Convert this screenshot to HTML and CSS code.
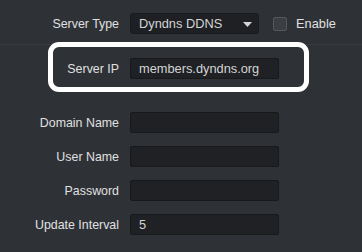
FILE: index.html
```html
<!DOCTYPE html>
<html lang="en">
<head>
  <meta charset="UTF-8" />
  <title>DDNS Settings</title>
  <link rel="stylesheet" href="styles.css">
</head>
<body>

  <div class="top">
    <div class="row">
      <label class="lbl">Server Type</label>
      <div class="select">
        <span>Dyndns DDNS</span>
        <svg class="arrow" width="9" height="5" viewBox="0 0 9 5"><path d="M0 0 L9 0 L4.5 5 Z" fill="#d6d6d6"/></svg>
      </div>
      <span class="check"></span>
      <span class="enable">Enable</span>
    </div>
  </div>

  <!-- highlighted field -->
  <div class="highlight">
    <div class="row">
      <label class="lbl">Server IP</label>
      <div class="input">members.dyndns.org</div>
    </div>
  </div>

  <div class="row field">
    <label class="lbl">Domain Name</label>
    <div class="input"></div>
  </div>
  <div class="row field">
    <label class="lbl">User Name</label>
    <div class="input"></div>
  </div>
  <div class="row field">
    <label class="lbl">Password</label>
    <div class="input"></div>
  </div>
  <div class="row field">
    <label class="lbl">Update Interval</label>
    <div class="input">5</div>
  </div>

</body>
</html>
```

FILE: styles.css
```css
* { box-sizing: border-box; margin: 0; padding: 0; }
body {
  background: #2e3136;
  font-family: "Liberation Sans", Arial, sans-serif;
  font-size: 12.4px;
  color: #e0e0e0;
  width: 362px;
  height: 252px;
  overflow: hidden;
}
.top {
  height: 45px;
  padding-top: 13px;
  border-bottom: 1px solid #383b40;
}
.row {
  display: flex;
  align-items: center;
  height: 21px;
}
.lbl {
  width: 119px;
  text-align: right;
  margin-right: 11px;
  white-space: nowrap;
}
.select {
  width: 129px;
  height: 21px;
  background: #1e2024;
  border: 1px solid #1a1b1e;
  border-radius: 3px;
  display: flex;
  align-items: center;
  justify-content: space-between;
  padding: 0 6px 0 8px;
  font-size: 12.8px;
  color: #d4d4d4;
}
.arrow { margin-top: 1px; }
.check {
  width: 14px;
  height: 14px;
  margin-left: 14px;
  background: #3b3e43;
  border: 1px solid #55585d;
  border-radius: 2px;
}
.enable {
  margin-left: 9px;
  font-size: 12.8px;
}
.highlight {
  margin: -3px 0 0 48px;
  width: 261px;
  border: 5px solid #fff;
  border-radius: 11px;
  padding: 11px 0 8px 0;
}
.highlight .lbl { width: 66px; }
.input {
  width: 149px;
  height: 21px;
  background: #1f2124;
  border: 1px solid #18191b;
  border-radius: 2px;
  padding-left: 8px;
  line-height: 19px;
  font-size: 12.8px;
  color: #d4d4d4;
}
.field { margin-top: 13px; }
.highlight + .field { margin-top: 20px; }
```
